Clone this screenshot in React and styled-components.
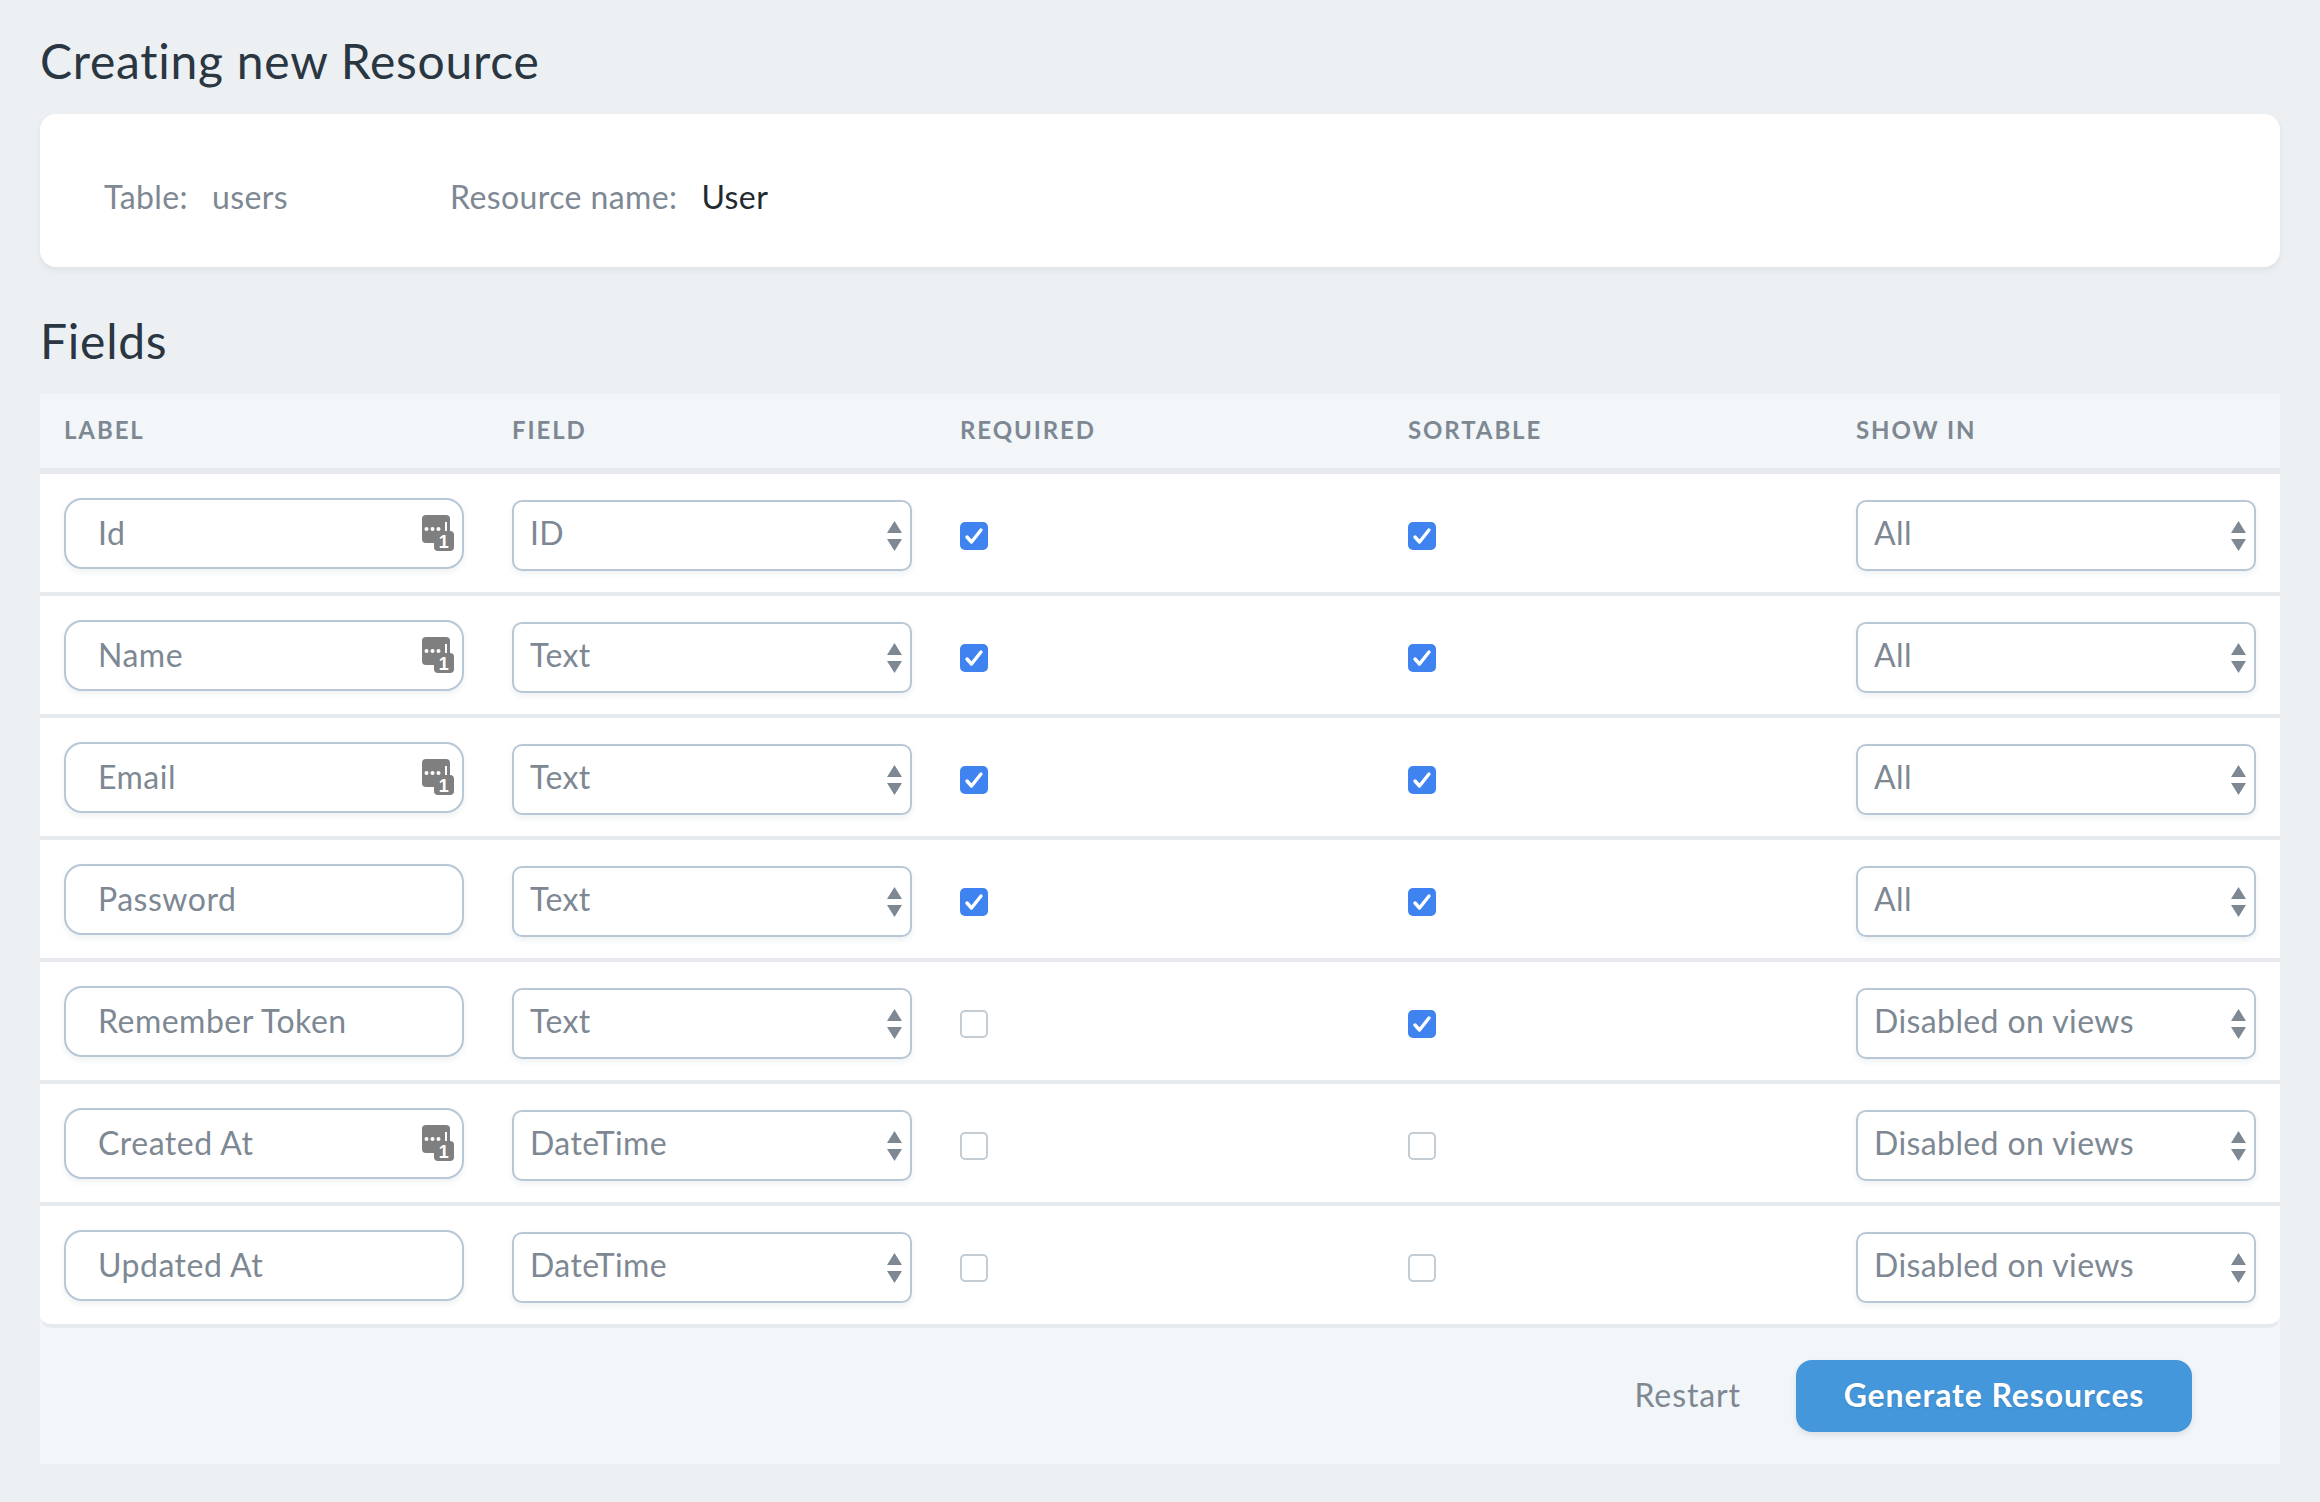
import styled, { createGlobalStyle } from 'styled-components';

const GlobalStyle = createGlobalStyle`
  html, body {
    margin: 0;
    padding: 0;
    background: #edf0f3;
  }
  * {
    box-sizing: border-box;
  }
`

const Page = styled.div`
  width: 2320px;
  height: 1502px;
  padding: 31px 40px 0;
  font-family: Lato, "Noto Sans", sans-serif;
  font-size: 32px;
  letter-spacing: 0.4px;
  color: #7d8893;
  overflow: hidden;
`

const Heading = styled.h1`
  margin: ${props => props.$top || 0}px 0 23px;
  font-size: 48px;
  line-height: 60px;
  font-weight: 400;
  letter-spacing: 0.75px;
  color: #2a3642;
`

const InfoCard = styled.section`
  height: 153px;
  background: #fff;
  border-radius: 16px;
  box-shadow: 0 3px 6px rgba(40, 60, 80, 0.08);
  display: flex;
  align-items: center;
  padding: 12px 64px 0;
`

const InfoItem = styled.div`
  display: flex;
  width: ${props => props.$width}px;
  gap: 24px;
`

const InfoValue = styled.span`
  color: ${props => props.$dark ? '#22292f' : '#7d8893'};
`

const Table = styled.section`
  background: #f3f6f9;
`

const Row = styled.div`
  display: grid;
  grid-template-columns: repeat(5, 448px);
  height: ${props => props.$header ? 80 : 122}px;
  background: ${props => props.$header ? '#f3f6f9' : '#fff'};
  border-bottom: ${props => props.$header ? 6 : 4}px solid #e6eaee;
  align-items: center;
  &:nth-child(8) {
    border-bottom-right-radius: 12px;
    border-bottom-left-radius: 12px;
  }
`

const HeaderCell = styled.div`
  padding: 0 0 4px 24px;
  font-size: 24px;
  font-weight: 700;
  letter-spacing: 1.9px;
  color: #7d8893;
`

const Cell = styled.div`
  padding-left: 24px;
  height: 118px;
  display: flex;
  align-items: flex-start;
  padding-top: ${props => props.$top}px;
`

const InputWrap = styled.div`
  position: relative;
  width: 400px;
  height: 71px;
`

const TextInput = styled.input`
  display: block;
  width: 100%;
  height: 100%;
  padding: 0 60px 2px 32px;
  border: 2px solid #b8c7d6;
  border-radius: 18px;
  background: #fff;
  box-shadow: 0 3px 6px rgba(40, 60, 80, 0.08);
  font: inherit;
  letter-spacing: 0.5px;
  color: #7d8893;
  outline: none;
`

const KeyIcon = styled.svg`
  position: absolute;
  right: 10px;
  top: 17px;
  width: 32px;
  height: 36px;
  overflow: visible;
`

const SelectWrap = styled.div`
  position: relative;
  width: 400px;
  height: 71px;
`

const Select = styled.select`
  display: block;
  width: 100%;
  height: 100%;
  padding: 0 50px 6px 16px;
  border: 2px solid #b8c7d6;
  border-radius: 10px;
  background: #fff;
  box-shadow: 0 3px 6px rgba(40, 60, 80, 0.08);
  font: inherit;
  letter-spacing: 0.4px;
  color: #7d8893;
  appearance: none;
  outline: none;
`

const Arrows = styled.svg`
  position: absolute;
  right: 10px;
  top: 21px;
  width: 15px;
  height: 30px;
  pointer-events: none;
`

const CheckBox = styled.span`
  display: flex;
  align-items: center;
  justify-content: center;
  width: 28px;
  height: 28px;
  margin-top: 24px;
  border-radius: 5px;
  background: ${props => props.$checked ? '#3f83f0' : '#fff'};
  border: ${props => props.$checked ? 'none' : '2px solid #c4ccd4'};
`

const Footer = styled.footer`
  height: 136px;
  display: flex;
  align-items: center;
  justify-content: flex-end;
  padding-right: 88px;
  gap: 55px;
`

const RestartLink = styled.a`
  color: #7d8893;
  letter-spacing: 0.9px;
  margin-bottom: 4px;
`

const GenerateButton = styled.button`
  width: 396px;
  height: 72px;
  padding: 0 0 3px;
  border: none;
  border-radius: 16px;
  background: #4497db;
  box-shadow: 0 3px 6px rgba(40, 60, 80, 0.12);
  color: #fff;
  font: inherit;
  font-weight: 700;
  letter-spacing: 0.9px;
  text-shadow: 0 1px 2px rgba(0, 0, 0, 0.15);
`

const columns = ['Label', 'Field', 'Required', 'Sortable', 'Show in']

const fields = [
  { label: 'Id', type: 'ID', required: true, sortable: true, show: 'All', key: true },
  { label: 'Name', type: 'Text', required: true, sortable: true, show: 'All', key: true },
  { label: 'Email', type: 'Text', required: true, sortable: true, show: 'All', key: true },
  { label: 'Password', type: 'Text', required: true, sortable: true, show: 'All', key: false },
  { label: 'Remember Token', type: 'Text', required: false, sortable: true, show: 'Disabled on views', key: false },
  { label: 'Created At', type: 'DateTime', required: false, sortable: false, show: 'Disabled on views', key: true },
  { label: 'Updated At', type: 'DateTime', required: false, sortable: false, show: 'Disabled on views', key: false },
]

const PasswordBadge = () => (
  <KeyIcon viewBox="0 0 32 36">
    <rect x="0" y="0" width="28" height="28" rx="4" fill="#7f7f7f" />
    <circle cx="4.5" cy="14" r="2" fill="#fff" />
    <circle cx="10.5" cy="14" r="2" fill="#fff" />
    <circle cx="16.5" cy="14" r="2" fill="#fff" />
    <rect x="23" y="7" width="2" height="13" fill="#fff" />
    <rect x="12" y="16" width="20" height="20" rx="4" fill="#7f7f7f" />
    <text x="22" y="33" textAnchor="middle" fontSize="18" fontWeight="700" fontFamily="Liberation Sans, sans-serif" fill="#fff">1</text>
  </KeyIcon>
)

const SortArrows = () => (
  <Arrows viewBox="0 0 15 30">
    <path d="M7.5 0L15 12H0Z" fill="#7d8893" />
    <path d="M0 18H15L7.5 30Z" fill="#7d8893" />
  </Arrows>
)

const Check = ({ checked }) => (
  <CheckBox $checked={checked}>
    {checked && (
      <svg width="20" height="18" viewBox="0 0 20 18">
        <path d="M3 10l4.5 5L17 3" fill="none" stroke="#fff" strokeWidth="3.4" strokeLinecap="round" strokeLinejoin="round" />
      </svg>
    )}
  </CheckBox>
)

const Dropdown = ({ value }) => (
  <SelectWrap>
    <Select defaultValue={value}>
      <option>{value}</option>
    </Select>
    <SortArrows />
  </SelectWrap>
)

const App = () => {
  return (
    <Page>
      <GlobalStyle />
      <Heading>Creating new Resource</Heading>
      <InfoCard>
        <InfoItem $width={346}>
          <span>Table:</span>
          <InfoValue>users</InfoValue>
        </InfoItem>
        <InfoItem $width={400}>
          <span>Resource name:</span>
          <InfoValue $dark>User</InfoValue>
        </InfoItem>
      </InfoCard>
      <Heading $top={44}>Fields</Heading>
      <Table>
        <Row $header>
          {columns.map(name => (
            <HeaderCell key={name}>{name.toUpperCase()}</HeaderCell>
          ))}
        </Row>
        {fields.map(field => (
          <Row key={field.label}>
            <Cell $top={24}>
              <InputWrap>
                <TextInput defaultValue={field.label} />
                {field.key && <PasswordBadge />}
              </InputWrap>
            </Cell>
            <Cell $top={26}>
              <Dropdown value={field.type} />
            </Cell>
            <Cell $top={24}>
              <Check checked={field.required} />
            </Cell>
            <Cell $top={24}>
              <Check checked={field.sortable} />
            </Cell>
            <Cell $top={26}>
              <Dropdown value={field.show} />
            </Cell>
          </Row>
        ))}
        <Footer>
          <RestartLink>Restart</RestartLink>
          <GenerateButton>Generate Resources</GenerateButton>
        </Footer>
      </Table>
    </Page>
  )
}

export default App;
